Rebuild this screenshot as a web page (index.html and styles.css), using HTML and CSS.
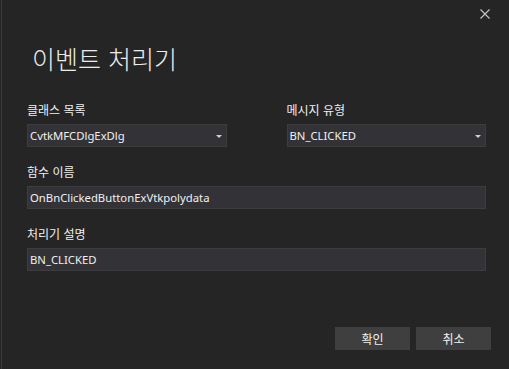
FILE: index.html
```html
<!DOCTYPE html>
<html lang="ko">
<head>
  <meta charset="UTF-8" />
  <title>이벤트 처리기</title>
  <link rel="stylesheet" href="styles.css">
</head>
<body>
  <div class="dialog">
    <div class="titlebar">
      <span class="close">
        <svg width="10" height="10" viewBox="0 0 10 10"><path d="M0.5 0.5 L9.5 9.5 M9.5 0.5 L0.5 9.5" stroke="#c8c8c8" stroke-width="1.1"/></svg>
      </span>
    </div>
    <h1>이벤트 처리기</h1>

    <div class="row">
      <div class="field">
        <label>클래스 목록</label>
        <div class="combo">CvtkMFCDlgExDlg<span class="arrow"></span></div>
      </div>
      <div class="field">
        <label>메시지 유형</label>
        <div class="combo">BN_CLICKED<span class="arrow"></span></div>
      </div>
    </div>

    <div class="field">
      <label>함수 이름</label>
      <div class="input">OnBnClickedButtonExVtkpolydata</div>
    </div>

    <div class="field">
      <label>처리기 설명</label>
      <div class="input">BN_CLICKED</div>
    </div>

    <div class="buttons">
      <button>확인</button>
      <button>취소</button>
    </div>
  </div>
</body>
</html>
```

FILE: styles.css
```css
html, body {
  margin: 0;
  background-color: #252526;
}
body {
  color: #f0f0f0;
  font-family: "Noto Sans", "Noto Sans CJK KR", sans-serif;
  font-size: 11.3px;
}
.dialog {
  height: 369px;
  box-sizing: border-box;
  border-left: 1px solid #3a3a3a;
  margin-left: 1px;
  padding: 0 23px 0 25px;
}
.titlebar {
  display: flex;
  justify-content: flex-end;
  height: 34px;
  padding-top: 9px;
  box-sizing: border-box;
  margin-right: -4px;
}
.close svg {
  display: block;
}
h1 {
  margin: 0 0 0 5px;
  font-family: "Noto Sans CJK KR", sans-serif;
  font-weight: 300;
  font-size: 25px;
  line-height: 48px;
  color: #ececec;
}
.row {
  display: flex;
  gap: 60px;
  margin-top: 20px;
}
.row .field {
  width: 200px;
}
.field label {
  display: block;
  font-family: "Noto Sans CJK KR", sans-serif;
  font-size: 12px;
  line-height: 16px;
  margin-bottom: 6px;
}
.field {
  margin-bottom: 17px;
}
.combo, .input {
  height: 23px;
  box-sizing: border-box;
  background: #333337;
  border: 1px solid #3d3d3d;
  padding: 0 2px;
  line-height: 21px;
  position: relative;
}
.arrow {
  position: absolute;
  right: 4px;
  top: 10px;
  border-left: 3px solid transparent;
  border-right: 3px solid transparent;
  border-top: 3px solid #d0d0d0;
}
.buttons {
  display: flex;
  justify-content: flex-end;
  gap: 6px;
  margin-top: 56px;
  margin-right: -5px;
}
button {
  width: 75px;
  height: 23px;
  border: none;
  background: #3f3f3f;
  color: #f0f0f0;
  font-family: "Noto Sans CJK KR", sans-serif;
  font-size: 12px;
  padding: 0;
}
```
